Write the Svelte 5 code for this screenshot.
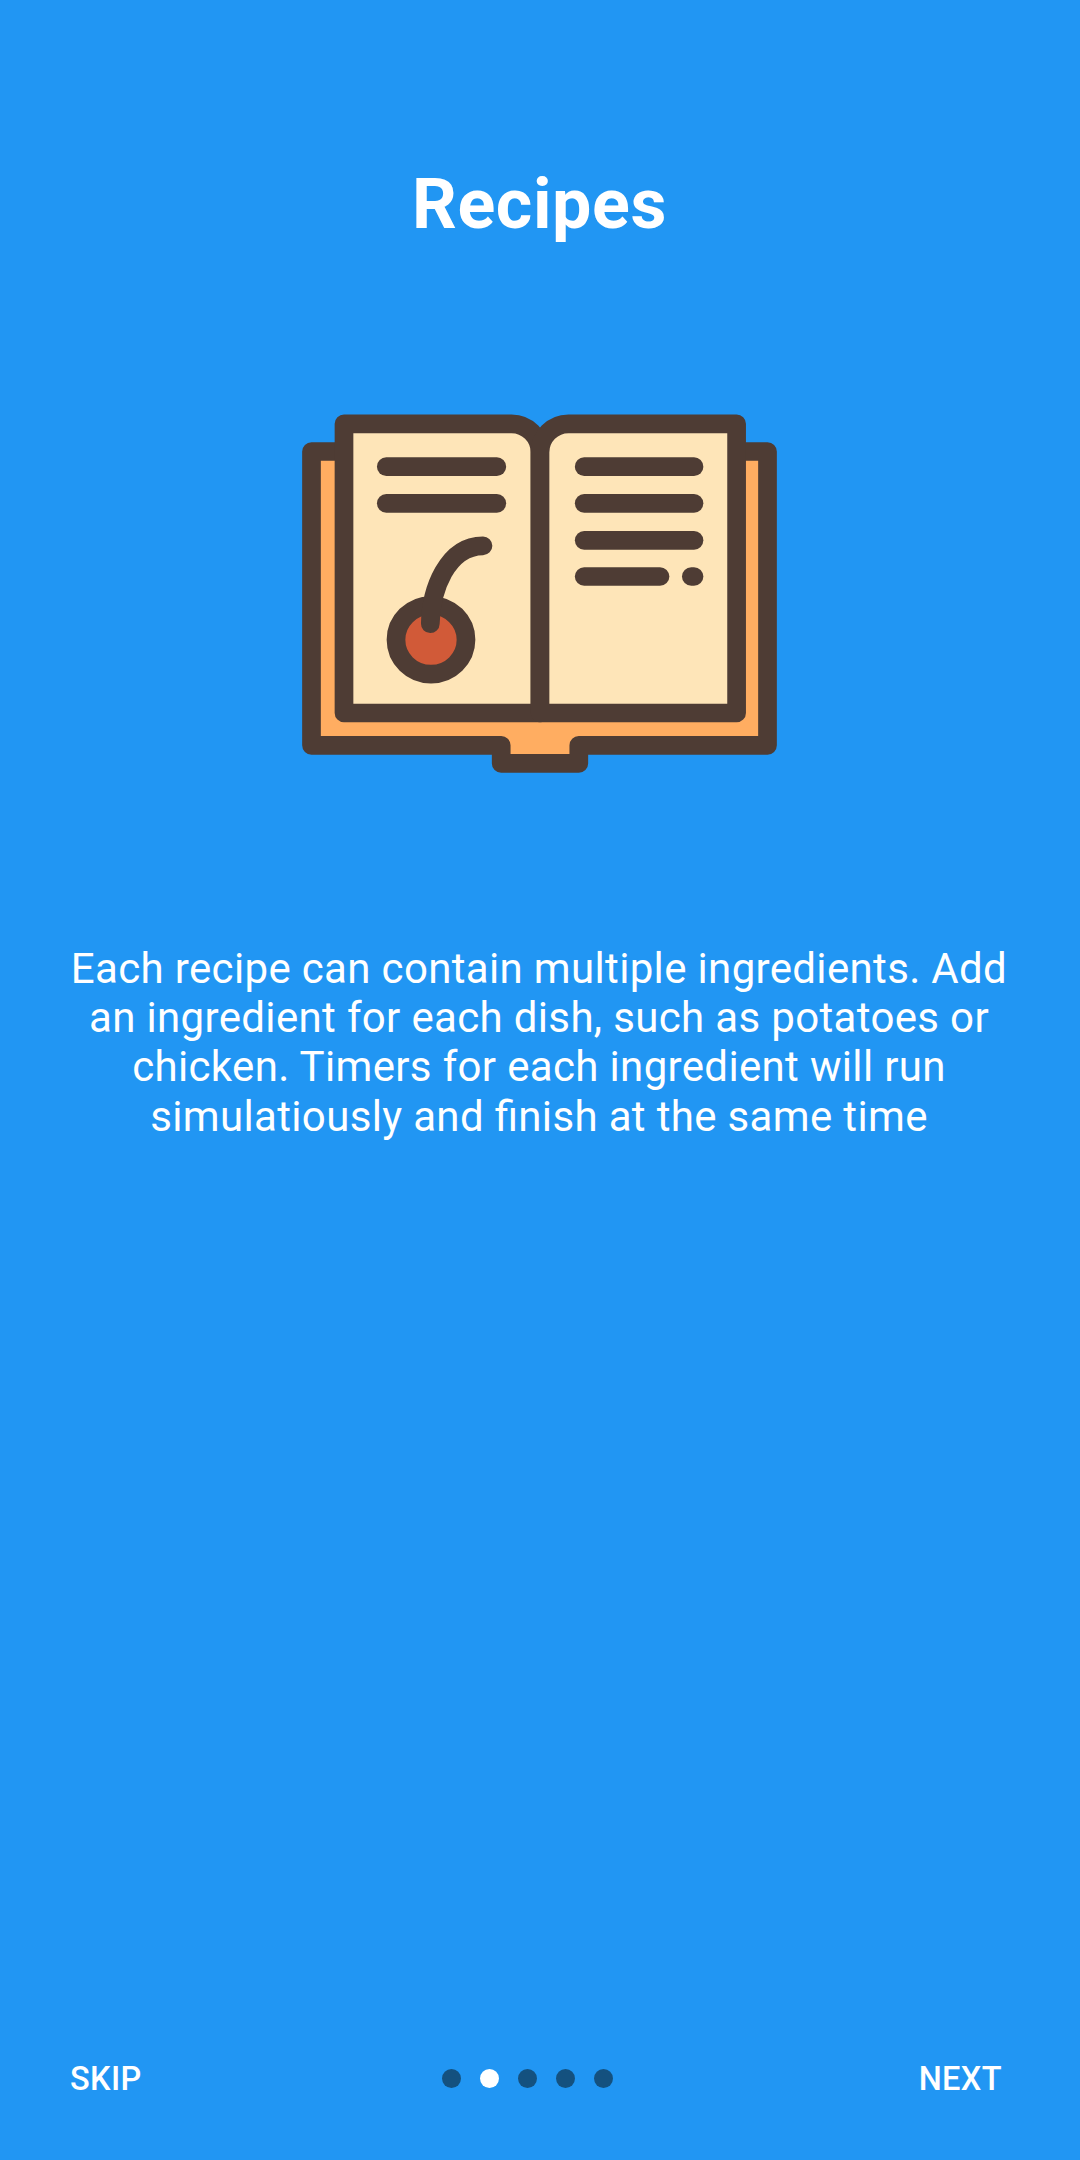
<script>
  const slides = 5;
  const active = 1;
  const textLines = [
    [386.3, 466.7, 496.8],
    [386.3, 503.3, 496.8],
    [584.2, 466.7, 694],
    [584.2, 503.3, 694],
    [584.2, 540.3, 694],
    [584.2, 576.5, 660],
    [691.3, 576.5, 694]
  ];
</script>

<main class="intro">
  <h1>Recipes</h1>

  <svg class="book" viewBox="290 400 500 390" aria-hidden="true">
    <g class="outline">
      <path class="cover" d="M311.5 451.5H767.5V745.3H578.8V763.4H501.2V745.3H311.5Z" />
      <path class="page" d="M344 423.8H511.5A28.5 28.5 0 0 1 540 452.3V713H344Z" />
      <path class="page" d="M736.6 423.8H568.5A28.5 28.5 0 0 0 540 452.3V713H736.6Z" />
      {#each textLines as [x, y, end]}
        <path d="M{x} {y}H{end}" />
      {/each}
      <ellipse class="cherry" cx="431" cy="639.8" rx="35" ry="34.3" />
      <path class="stem" d="M430.3 623.7C431 590 447 546 483 545.8" />
    </g>
  </svg>

  <p>
    Each recipe can contain multiple ingredients. Add<br />
    an ingredient for each dish, such as potatoes or<br />
    chicken. Timers for each ingredient will run<br />
    simulatiously and finish at the same time
  </p>

  <footer>
    <button>SKIP</button>
    <div class="dots">
      {#each Array(slides) as _, i}
        <span class:active={i === active}></span>
      {/each}
    </div>
    <button class="next">NEXT</button>
  </footer>
</main>

<style>
  :global(body) {
    background: #2196f3;
  }

  .intro {
    box-sizing: border-box;
    width: 1080px;
    height: 2160px;
    padding: 163px 0 42px;
    display: flex;
    flex-direction: column;
    align-items: center;
    background: #2196f3;
    color: #fff;
    font-family: Roboto, "Liberation Sans", sans-serif;
  }

  h1 {
    margin: 0 1px 0 0;
    font-size: 70px;
    line-height: 82px;
    font-weight: 700;
    letter-spacing: 0.6px;
  }

  .book {
    display: block;
    width: 500px;
    height: 390px;
    margin-top: 155px;
  }

  .outline {
    fill: none;
    stroke: #4e3c34;
    stroke-width: 18.7;
    stroke-linecap: round;
    stroke-linejoin: round;
  }

  .cover {
    fill: #ffad61;
  }

  .page {
    fill: #fee5b8;
  }

  .cherry {
    fill: #d15a38;
  }

  p {
    margin: 154px 2px 0 0;
    font-size: 42px;
    line-height: 49.2px;
    letter-spacing: 0.34px;
    font-feature-settings: "liga" 1;
    text-align: center;
    white-space: nowrap;
  }

  footer {
    box-sizing: border-box;
    width: 100%;
    height: 78px;
    margin-top: auto;
    padding: 0 78px 0 70px;
    display: grid;
    grid-template-columns: 1fr auto 1fr;
    align-items: center;
  }

  button {
    padding: 0;
    border: 0;
    background: none;
    color: inherit;
    font: 500 32.5px/38px Roboto, "Liberation Sans", sans-serif;
    letter-spacing: 0.4px;
    text-align: left;
  }

  .next {
    text-align: right;
  }

  .dots {
    display: flex;
    gap: 19px;
    margin: 0 17px 2px 0;
  }

  .dots span {
    width: 19px;
    height: 19px;
    border-radius: 50%;
    background: #14517f;
  }

  .dots .active {
    background: #fff;
  }
</style>
